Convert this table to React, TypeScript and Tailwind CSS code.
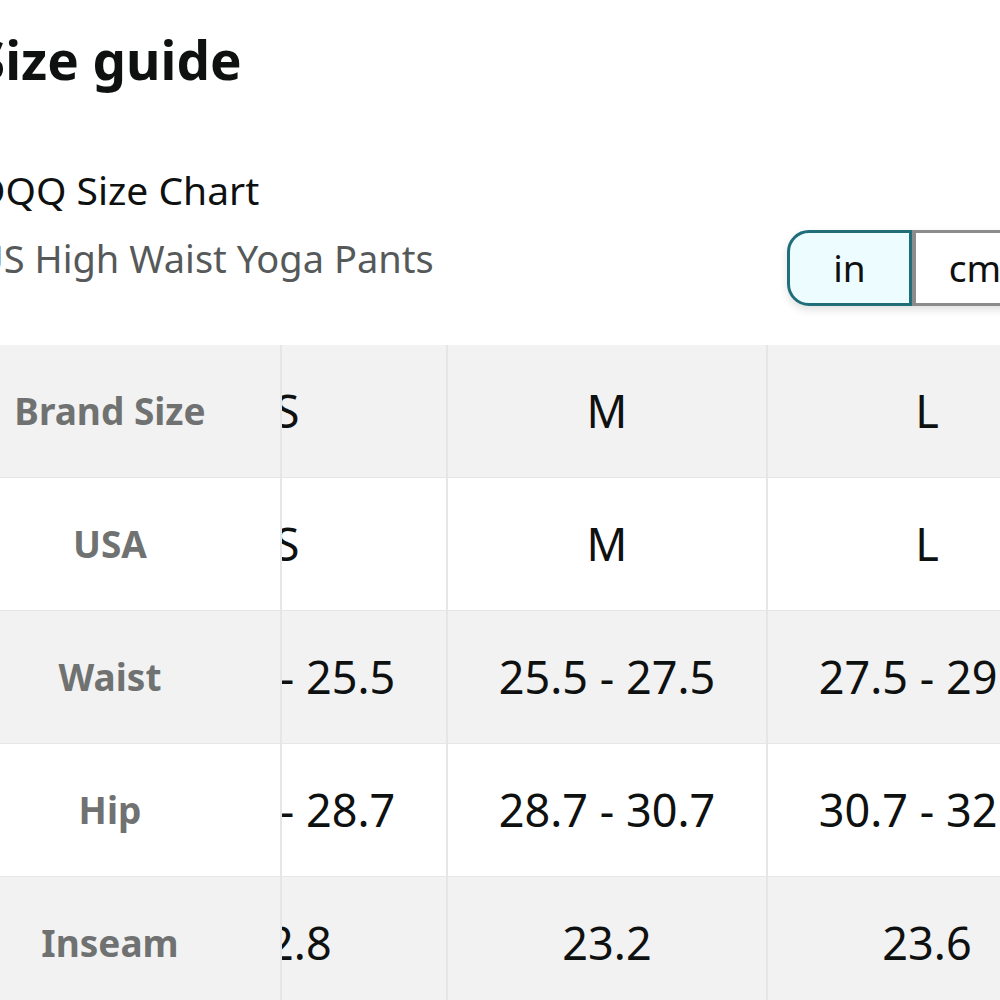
import React from "react";

const rows = [
  { label: "Brand Size", vals: ["S", "M", "L"], grey: true },
  { label: "USA", vals: ["S", "M", "L"], grey: false },
  { label: "Waist", vals: ["23.5 - 25.5", "25.5 - 27.5", "27.5 - 29.5"], grey: true },
  { label: "Hip", vals: ["26.7 - 28.7", "28.7 - 30.7", "30.7 - 32.7"], grey: false },
  { label: "Inseam", vals: ["22.8", "23.2", "23.6"], grey: true },
];

export default function App() {
  return (
    <div
      className="w-[1000px] h-[1000px] overflow-hidden bg-white relative"
      style={{ fontFamily: '"Noto Sans", "Open Sans", sans-serif' }}
    >
      <div className="ml-[-24px] w-[1061px]">
        <h1 className="pt-[33px] text-[53px] leading-none font-bold text-[#0f1111]">Size guide</h1>
        <div className="mt-[84px] ml-[1px] text-[39px] leading-none text-[#0f1111]">DQQ Size Chart</div>
        <div className="mt-[21px] flex justify-between items-start">
          <div className="mt-[9px] text-[38px] leading-none text-[#565959]">US High Waist Yoga Pants</div>
          <div className="flex shadow-[0_4px_8px_rgba(0,0,0,0.12)] rounded-l-[22px]">
            <div className="w-[125px] h-[76px] border-[3px] border-[#1f6e7a] bg-[#edfcff] rounded-l-[22px] flex items-center justify-center text-[37px] text-[#0f1111]">
              in
            </div>
            <div className="w-[125px] h-[76px] border-[3px] border-l-[4px] border-[#8c8c8c] bg-white flex items-center justify-center text-[37px] text-[#0f1111]">
              cm
            </div>
          </div>
        </div>
      </div>

      <div className="mt-[39px]">
        {rows.map((r, i) => (
          <div
            key={i}
            className={`flex h-[133px] border-b border-[#e6e6e6] ${r.grey ? "bg-[#f2f2f2]" : "bg-white"}`}
          >
            <div
              className={`relative z-10 w-[282px] shrink-0 border-r-2 border-[#e6e6e6] pr-[60px] flex items-center justify-center text-[37px] font-bold text-[#707272] ${r.grey ? "bg-[#f2f2f2]" : "bg-white"}`}
            >
              {r.label}
            </div>
            {r.vals.map((v, j) => (
              <div
                key={j}
                className={`w-[320px] shrink-0 border-r-2 border-[#e6e6e6] flex items-center justify-center text-[45px] text-[#0f1111] whitespace-nowrap ${j === 0 ? "ml-[-154px]" : ""}`}
              >
                {v}
              </div>
            ))}
          </div>
        ))}
      </div>
    </div>
  );
}
